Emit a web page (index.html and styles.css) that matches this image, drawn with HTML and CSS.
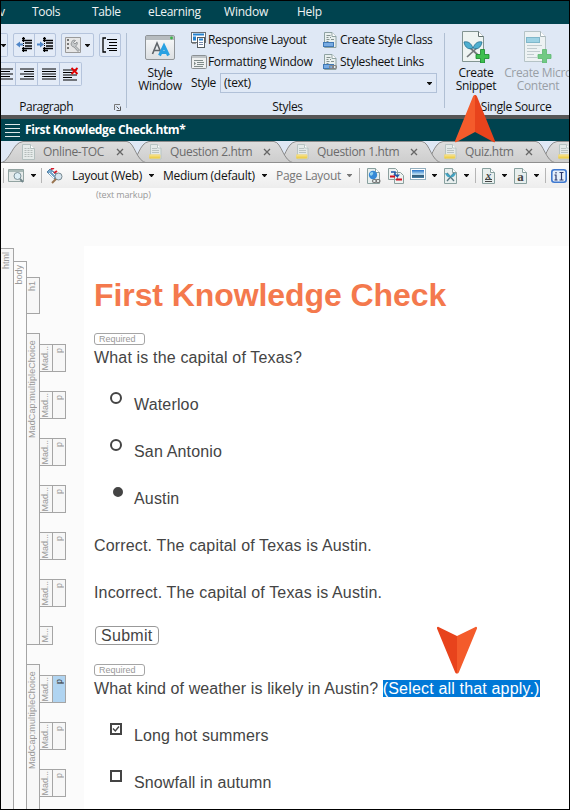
FILE: index.html
```html
<!DOCTYPE html>
<html lang="en">
<head>
<meta charset="utf-8">
<title>First Knowledge Check.htm</title>
<link rel="stylesheet" href="styles.css">
</head>
<body>
<svg class="defs" aria-hidden="true">
  <defs>
    <linearGradient id="gold" x1="0" y1="0" x2="0" y2="1"><stop offset="0" stop-color="#f7e59a"/><stop offset="1" stop-color="#ebc937"/></linearGradient>
    <linearGradient id="win" x1="0" y1="0" x2="0" y2="1"><stop offset="0" stop-color="#fafbfb"/><stop offset="1" stop-color="#dcdfe2"/></linearGradient>
    <linearGradient id="tabfill" x1="0" y1="0" x2="0" y2="1"><stop offset="0" stop-color="#dedede"/><stop offset="1" stop-color="#cdcdcd"/></linearGradient>
    <linearGradient id="sky" x1="0" y1="0" x2="0" y2="1"><stop offset="0" stop-color="#2373c8"/><stop offset=".55" stop-color="#c3e4f7"/><stop offset=".7" stop-color="#2c5471"/><stop offset="1" stop-color="#4986ac"/></linearGradient>
  </defs>
  <symbol id="caret" viewBox="0 0 5 3"><path d="M0 0h5v.6L2.9 3h-.8L0 .6z" fill="currentColor"/></symbol>
  <symbol id="close" viewBox="0 0 8 8"><path d="M1 1l6 6M7 1L1 7" stroke="#666" stroke-width="1.3"/></symbol>
  <symbol id="doc" viewBox="0 0 13 16"><path d="M.5.5h8l4 4v11H.5z" fill="#e6ebea" stroke="#b3bfbe"/><path d="M8.500.5v4h4" fill="#fff" stroke="#b3bfbe"/><path d="M2.500 4.500h5M2.500 6.500h8M2.500 8.500h8M2.500 10.500h8M2.500 12.500h8" stroke="#b5bcbb"/><path d="M5 3v11M8 5v9" stroke="#e6ebea"/></symbol>
  <symbol id="quiz" viewBox="0 0 13 16"><path d="M1.500.5h7l3.500 3.500v11H1.500z" fill="#e4e9e8" stroke="#b8c4c3"/><path d="M8.500.5v3.500H12" fill="#fff" stroke="#b8c4c3"/><path d="M3 4.500h5M3 6.500h7M3 8.500h7" stroke="#b9c2c1"/><rect x=".2" y="10.500" width="11" height="4" rx=".8" fill="url(#gold)" stroke="#e9d27a" stroke-width=".5"/></symbol>
  <symbol id="sheet" viewBox="0 0 14 16"><path d="M1.500.5h7.500l4 4v11H1.500z" fill="#e9f0ef" stroke="#8fa3a2"/><path d="M9 .5v4h4" fill="#fff" stroke="#8fa3a2"/><path d="M3.500 3.500h4M3.500 5.500h2M7 5.500h1M3.500 7.500h3M8 7.500h3M3.500 9.500h2" stroke="#83918f"/><rect x=".5" y="10.500" width="10" height="4" fill="#78ace3" stroke="#3f78b5"/></symbol>
  <symbol id="page" viewBox="0 0 13 16"><path d="M.5.5h8l4 4v11H.5z" fill="#e8efee" stroke="#88a09e"/><path d="M8.500.5v4h4" fill="#fff" stroke="#88a09e"/></symbol>
</svg>

<div class="window">
  <nav class="menu">
    <span class="m-cut">v</span><span class="m-tools">Tools</span><span class="m-table">Table</span><span class="m-elearn">eLearning</span><span class="m-window">Window</span><span>Help</span>
  </nav>

  <section class="ribbon">
    <div class="group paragraph">
      <div class="btn-row">
        <div class="btns"><span class="cell c-edge"><svg class="caret"><use href="#caret"/></svg></span></div>
        <div class="btns">
          <span class="cell c21"><svg width="17" height="16" viewBox="0 0 17 16"><path d="M6 1.500h3M6 3.500h10M9 6h7M9 9h7M6 11.500h10M6 13.500h5" stroke="#000" stroke-width="1.300"/><path d="M7.500 0v16" stroke="#000" stroke-dasharray="1 1"/><path d="M0 7.500l4-3v2h3v2H4v2z" fill="#4f86c8"/></svg></span>
          <span class="cell c21"><svg width="17" height="16" viewBox="0 0 17 16"><path d="M6 1.500h3M6 3.500h10M9 6h7M9 9h7M6 11.500h10M6 13.500h5" stroke="#000" stroke-width="1.300"/><path d="M7.500 0v16" stroke="#000" stroke-dasharray="1 1"/><path d="M7 7.500l-4-3v2H0v2h3v2z" fill="#4f86c8"/></svg></span>
        </div>
        <div class="btns">
          <span class="cell c33"><svg width="16" height="16" viewBox="0 0 16 16"><path d="M.5.5h15v15H.5z" fill="#e6e6e6" stroke="#9a9a9a"/><path d="M3 2v12" stroke="#777" stroke-width="2" stroke-dasharray="2 2"/><path d="M6.500 5.500a3 3 0 0 1 4-2L8.500 5.500 10 7l2-2a3 3 0 0 1-1.500 4L14.500 13 13 14.500 9 10a3 3 0 0 1-2.500-4.500z" fill="#c5c8ca" stroke="#85898c" stroke-width=".8"/></svg><svg class="caret"><use href="#caret"/></svg></span>
        </div>
        <div class="btns">
          <span class="cell c21"><svg width="16" height="16" viewBox="0 0 16 16"><path d="M4 1H1v14h3" fill="none" stroke="#000" stroke-width="1.300"/><path d="M5 2.500h10M7 5.500h8M7 8.500h8M5 11.500h10M7 13.500h8" stroke="#000" stroke-width="1.200"/></svg></span>
        </div>
      </div>
      <div class="btn-row second">
        <div class="btns">
          <span class="cell c-left"><svg width="12" height="12" viewBox="0 0 12 12"><path d="M0 1h12M0 3.500h9M0 6h12M0 8.500h9M0 11h12" stroke="#000" stroke-width="1.200"/></svg></span>
          <span class="cell c22"><svg width="14" height="12" viewBox="0 0 14 12"><path d="M0 1h14M4 3.500h10M0 6h14M4 8.500h10M0 11h14" stroke="#000" stroke-width="1.200"/></svg></span>
          <span class="cell c22"><svg width="14" height="12" viewBox="0 0 14 12"><path d="M0 1h14M0 3.500h14M0 6h14M0 8.500h14M0 11h14" stroke="#000" stroke-width="1.200"/></svg></span>
          <span class="cell c22"><svg width="16" height="14" viewBox="0 0 16 14"><path d="M0 3h14M0 5.500h9M0 8h14M0 10.500h9M0 13h14" stroke="#000" stroke-width="1.200"/><path d="M8.500 1l6 6M14.500 1l-6 6" stroke="#e00000" stroke-width="1.800"/></svg></span>
        </div>
      </div>
      <div class="caption cap-para"><span>Paragraph</span><svg width="7" height="7" viewBox="0 0 7 7"><path d="M.5 6V.5H6" fill="none" stroke="#777"/><path d="M2.500 2.500L5 5M6.500 2.500v4h-4" fill="none" stroke="#555"/></svg></div>
    </div>

    <div class="group styles">
      <div class="style-body">
        <div class="big">
          <svg width="30" height="25" viewBox="0 0 30 25"><rect x=".5" y=".5" width="29" height="24" rx="1.500" fill="url(#win)" stroke="#909599"/><path d="M1 1h28v4H1z" fill="#b7bcbf"/><circle cx="26.500" cy="3" r="1.400" fill="#3ab54a"/><path d="M7.500 19L12 8l4.500 11M9 15.500h6" fill="none" stroke="#5e6469" stroke-width="1.600"/><path d="M14.500 20.500L19 11l4.500 9.500M16 17.500h6" fill="none" stroke="#28a1e2" stroke-width="3"/></svg>
          <span>Style<br>Window</span>
        </div>
        <div class="links">
          <div class="link-row">
            <span class="link l-a"><svg width="16" height="16" viewBox="0 0 16 16"><rect x=".5" y=".5" width="14" height="10" fill="#fff" stroke="#696f75"/><path d="M2 2.500h11" stroke="#2481ce" stroke-width="2"/><path d="M2 4.500h3v4H2z" fill="#2481ce"/><rect x="6.500" y="5.500" width="7" height="10" fill="#fff" stroke="#555b60"/><path d="M8 7.500h4" stroke="#2481ce" stroke-width="2"/><path d="M8 10.500h4M8 12.500h4" stroke="#78a"/><path d="M1 11.500h4" stroke="#999"/></svg>Responsive Layout</span>
            <span class="link"><svg class="sheet-icon"><use href="#sheet"/></svg>Create Style Class</span>
          </div>
          <div class="link-row row-b">
            <span class="link l-a"><svg width="16" height="15" viewBox="0 0 16 15"><rect x=".5" y=".5" width="15" height="13" rx="1" fill="#eef0f0" stroke="#8b9094"/><path d="M1 2h14" stroke="#bfc4c7" stroke-width="2"/><path d="M3 5.500h9M6 7.500h7M6 9.500h7M3 11.500h9" stroke="#7f8b89"/><path d="M3 6.500l2 2-2 2z" fill="#7f8b89"/></svg>Formatting Window</span>
            <span class="link"><svg class="sheet-icon"><use href="#sheet"/><g fill="none" stroke="#858585" stroke-width="1.200"><rect x="6.500" y="11.500" width="4" height="3" rx="1.500"/><rect x="9.500" y="11.500" width="4" height="3" rx="1.500"/></g></svg>Stylesheet Links</span>
          </div>
          <div class="select-row"><label>Style</label><div class="select"><span>(text)</span><svg class="caret"><use href="#caret"/></svg></div></div>
        </div>
      </div>
      <div class="caption cap-styles">Styles</div>
    </div>

    <div class="group source">
      <div class="source-body">
        <div class="big">
          <svg width="28" height="32" viewBox="0 0 28 32"><path d="M.5.500h16l5 5v25H.5z" fill="#eef4f2" stroke="#829492"/><path d="M16.500.5v5h5" fill="#fff" stroke="#61716f"/><path d="M5 26L18 14M17 25L5 14" stroke="#73797b" stroke-width="1.700"/><path d="M2 11c4-1 7 1 9 6-4 2-8 0-9-6zM20 11c-4-1-7 1-9 6 4 2 8 0 9-6z" fill="#4eafd0" stroke="#246e8e" stroke-width=".8"/><path d="M18.500 18.500h4v5h4.500v4h-4.500v4.500h-4v-4.500H14v-4h4.500z" fill="#3dbf4e" stroke="#16852a" stroke-width=".8"/></svg>
          <span>Create<br>Snippet</span>
        </div>
        <div class="big disabled">
          <svg width="28" height="32" viewBox="0 0 28 32"><path d="M.5.500h16l5 5v25H.5z" fill="#edf2f3" stroke="#b5c3c6"/><path d="M16.500.5v5h5" fill="#fff" stroke="#a7b5b8"/><rect x="2.500" y="6.500" width="13" height="5" fill="#9dd2e4" stroke="#80b7ca"/><path d="M3 14.500h15M3 17.500h10M3 20.500h13M3 23.500h7M3 26.500h10" stroke="#c0cbce"/><path d="M18.500 18.500h4v5h4.500v4h-4.500v4.500h-4v-4.500H14v-4h4.500z" fill="#72ca84" stroke="#5cb870" stroke-width=".8"/></svg>
          <span>Create Micro<br>Content</span>
        </div>
      </div>
      <div class="caption">Single Source</div>
    </div>
  </section>

  <div class="divider"></div>

  <header class="title">
    <svg width="15" height="14" viewBox="0 0 15 14"><path d="M0 1.500h15M0 5.500h15M0 9.500h15M0 13.500h15" stroke="#dfe9ea"/></svg>
    <span>First Knowledge Check.htm*</span>
  </header>

  <div class="tabs">
    <svg class="tab-shapes" width="568" height="22" viewBox="1 141 568 22">
      <g fill="url(#tabfill)" stroke="#8b8b8b">
        <path d="M539 163c7-3 8-20 18-21.500h16V163z"/>
        <path d="M425 163c7-3 8-20 18-21.500h93c8 1 9 20 20 21.500z"/>
        <path d="M278 163c7-3 8-20 18-21.500h126c8 1 9 20 20 21.500z"/>
        <path d="M131 163c7-3 8-20 18-21.500h125c8 1 9 20 20 21.500z"/>
        <path d="M1 163C11 160 12 143 23 141.500h104c8 1 9 20 20 21.500z"/>
      </g>
      <path d="M1 162.500h568" stroke="#8f8f8f"/>
    </svg>
    <div class="tab t1"><svg class="file"><use href="#doc"/></svg><span>Online-TOC</span><svg class="x"><use href="#close"/></svg></div>
    <div class="tab t2"><svg class="file"><use href="#quiz"/></svg><span>Question 2.htm</span><svg class="x"><use href="#close"/></svg></div>
    <div class="tab t3"><svg class="file"><use href="#quiz"/></svg><span>Question 1.htm</span><svg class="x"><use href="#close"/></svg></div>
    <div class="tab t4"><svg class="file"><use href="#quiz"/></svg><span>Quiz.htm</span><svg class="x"><use href="#close"/></svg></div>
    <div class="tab t5"><svg class="file"><use href="#quiz"/></svg></div>
  </div>

  <div class="toolbar">
    <i class="sep"></i>
    <span class="tool w38"><svg width="17" height="16" viewBox="0 0 17 16"><path d="M.5 1.500h15v12H.5z" fill="#e5eae9" stroke="#92a3a1"/><path d="M1 3h14" stroke="#a8b9b7" stroke-width="2"/><circle cx="9.500" cy="8" r="3.500" fill="#dceef5" stroke="#7c9299"/><path d="M12 11l3 3" stroke="#71858b" stroke-width="1.800"/></svg><svg class="caret"><use href="#caret"/></svg></span>
    <i class="sep"></i>
    <span class="tool w31"><svg width="17" height="16" viewBox="0 0 17 16"><path d="M0 4l3-3 9 7-3 4z" fill="#76a7cc" stroke="#376b93" stroke-width=".8"/><path d="M4 1l3-1M7 5l3-2" stroke="#d41d2c" stroke-width="2"/><path d="M2 5l5 5M5 4l4 4" stroke="#fff"/><circle cx="11.500" cy="8.500" r="3.500" fill="#d6e5ef" stroke="#788991"/><path d="M9 11l-4 4" stroke="#98734f" stroke-width="2"/></svg></span>
    <span class="tool text w91"><b>Layout (Web)</b><svg class="caret"><use href="#caret"/></svg></span>
    <span class="tool text w113"><b>Medium (default)</b><svg class="caret"><use href="#caret"/></svg></span>
    <span class="tool text w83 off"><b>Page Layout</b><svg class="caret"><use href="#caret"/></svg></span>
    <i class="sep"></i>
    <span class="tool w21"><svg width="14" height="16" viewBox="0 0 14 16"><use href="#page" width="13" height="16"/><circle cx="6" cy="7" r="4.200" fill="#3689d6"/><path d="M3 5c2-2 4-1 3 1S4 8 3 7z" fill="#8fd0ed"/><g fill="none" stroke="#777" stroke-width="1.200"><rect x="5.500" y="11.500" width="4" height="3" rx="1.500"/><rect x="9" y="11.500" width="4" height="3" rx="1.500"/></g></svg></span>
    <span class="tool w22"><svg width="16" height="16" viewBox="0 0 16 16"><path d="M.5.5h7l2 2v9h-9zM6.500 4.500h6l3 3v8h-9z" fill="#edf2f1" stroke="#8ca09e"/><path d="M3 4h4v3" fill="none" stroke="#1e55a8" stroke-width="1.500"/><path d="M5 6.500h7l-2.500 3z" fill="#1e55a8"/><path d="M2 8.500h5M8 11.500h6" stroke="#cf1020" stroke-width="2"/></svg></span>
    <span class="tool w34 pic"><svg width="16" height="12" viewBox="0 0 16 12"><rect x=".5" y=".5" width="15" height="11" fill="#fff" stroke="#93aebd"/><path d="M2 2h12v8H2z" fill="url(#sky)"/></svg><svg class="caret"><use href="#caret"/></svg></span>
    <span class="tool w31b"><svg width="13" height="16" viewBox="0 0 13 16"><use href="#page"/><path d="M3 13l7-8M10 13L3 5" stroke="#58757f" stroke-width="1.300"/><path d="M1 5c3 0 5 2 5.500 4C4 10 2 8 1 5zM12 5C9 5 7 7 6.500 9 9 10 11 8 12 5z" fill="#42a3c2"/></svg><svg class="caret"><use href="#caret"/></svg></span>
    <i class="sep"></i>
    <span class="tool w32"><span class="glyph"><svg width="13" height="16" viewBox="0 0 13 16"><use href="#page"/><path d="M3 11.500h7M3 13.500h7" stroke="#444"/></svg><em class="gx">x</em></span><svg class="caret"><use href="#caret"/></svg></span>
    <span class="tool w31c"><span class="glyph"><svg width="13" height="16" viewBox="0 0 13 16"><use href="#page"/></svg><em class="ga">a</em></span><svg class="caret"><use href="#caret"/></svg></span>
    <i class="sep"></i>
    <span class="tool"><svg width="16" height="14" viewBox="0 0 16 14"><rect x=".8" y=".8" width="14.400" height="12.400" rx="2.500" fill="#e5effb" stroke="#3e78cf" stroke-width="1.600"/><path d="M5 3v1.500M3.500 6H5v5M3.500 11h3M8.500 3.500h4M10.500 3.500v7.500M8.500 11h4" fill="none" stroke="#2c3a6e" stroke-width="1.200"/></svg></span>
  </div>

  <main class="editor">
    <div class="markup">(text markup)</div>
    <div class="canvas">
      <aside class="structure">
        <div class="bar html"><span>html</span></div>
        <div class="bar body"><span>body</span></div>
        <div class="blocks">
          <div class="block h1-block"><div class="bar"><span>h1</span></div></div>
          <div class="block mc">
            <div class="bar"><span>MadCap:multipleChoice</span></div>
            <div class="cells">
              <div class="pair"><div class="bar"><span>Mad...</span></div><div class="bar p"><span>p</span></div></div>
              <div class="pair"><div class="bar"><span>Mad...</span></div><div class="bar p"><span>p</span></div></div>
              <div class="pair"><div class="bar"><span>Mad...</span></div><div class="bar p"><span>p</span></div></div>
              <div class="pair"><div class="bar"><span>Mad...</span></div><div class="bar p"><span>p</span></div></div>
              <div class="pair"><div class="bar"><span>Mad...</span></div><div class="bar p"><span>p</span></div></div>
              <div class="pair"><div class="bar"><span>Mad...</span></div><div class="bar p"><span>p</span></div></div>
              <div class="pair short"><div class="bar"><span>M...</span></div></div>
            </div>
          </div>
          <div class="block mc last">
            <div class="bar"><span>MadCap:multipleChoice</span></div>
            <div class="cells">
              <div class="pair"><div class="bar"><span>Mad...</span></div><div class="bar p active"><span>p</span></div></div>
              <div class="pair"><div class="bar"><span>Mad...</span></div><div class="bar p"><span>p</span></div></div>
              <div class="pair"><div class="bar"><span>Mad...</span></div><div class="bar p"><span>p</span></div></div>
            </div>
          </div>
        </div>
      </aside>
      <article class="page">
        <h1>First Knowledge Check</h1>
        <div class="required">Required</div>
        <p class="question">What is the capital of Texas?</p>
        <div class="option"><i class="radio"></i><p>Waterloo</p></div>
        <div class="option"><i class="radio"></i><p>San Antonio</p></div>
        <div class="option"><i class="radio on"></i><p>Austin</p></div>
        <p class="feedback">Correct. The capital of Texas is Austin.</p>
        <p class="feedback">Incorrect. The capital of Texas is Austin.</p>
        <div class="submit">Submit</div>
        <div class="required">Required</div>
        <p class="question tight">What kind of weather is likely in Austin? <mark>(Select all that apply.)</mark></p>
        <div class="option check"><svg width="12" height="12" viewBox="0 0 12 12"><path d="M1 1h10v10H1z" fill="#fff" stroke="#444" stroke-width="2"/><path d="M3 5.500l2.300 2.500L9 3.500" fill="none" stroke="#444" stroke-width="1.400"/></svg><p>Long hot summers</p></div>
        <div class="option check"><svg width="12" height="12" viewBox="0 0 12 12"><path d="M1 1h10v10H1z" fill="#fff" stroke="#444" stroke-width="2"/></svg><p>Snowfall in autumn</p></div>
      </article>
    </div>
  </main>

  <svg class="pointer up" width="42" height="49" viewBox="0 0 42 49"><path d="M21 1c-1 0-1.500.5-2 1.500L1 47c-.3 1 .5 1.700 1.500 1L21 38z" fill="#f45b2b"/><path d="M21 1c1 0 1.500.5 2 1.500L41 47c.3 1-.5 1.700-1.500 1L21 38z" fill="#e8431c"/></svg>
  <svg class="pointer down" width="42" height="48" viewBox="0 0 42 48"><path d="M21 47.500c-1 0-1.500-.5-2-1.500L1 2.500c-.3-1 .5-2 1.500-1.500L21 10z" fill="#e8431c"/><path d="M21 47.500c1 0 1.500-.5 2-1.500L41 2.500c.3-1-.5-2-1.500-1.500L21 10z" fill="#f45b2b"/></svg>
</div>
</body>
</html>
```
FILE: styles.css
```css
* { box-sizing: border-box; }
body { margin: 0; font: 12px/16px "Open Sans", "Noto Sans", sans-serif; letter-spacing: -.33px; color: #111; }
svg { display: block; flex: none; }
p, h1 { margin: 0; }
.defs { position: absolute; width: 0; height: 0; }
.window { position: relative; width: 570px; height: 810px; border: 1px solid #000; overflow: hidden; display: flex; flex-direction: column; background: #fbfbfb; white-space: nowrap; }
.window > * { flex: none; }
.caret { width: 5px; height: 3px; }

/* menu */
.menu { height: 23px; background: #00434f; color: #eef3f4; display: flex; line-height: 22px; }
.menu span { flex: none; }
.m-cut { width: 31px; margin-left: -2px; }
.m-cut + .m-tools { margin-left: 2px; }
.m-tools { width: 60px; }
.m-table { width: 56px; }
.m-elearn { width: 76px; }
.m-window { width: 73px; letter-spacing: -.2px; }

/* ribbon */
.ribbon { height: 91px; background: #dfe8f5; display: flex; padding-top: 9px; }
.group { flex: none; height: 75px; border-right: 1px solid #b0bfd3; display: flex; flex-direction: column; }
.paragraph { width: 126px; }
.btn-row { display: flex; gap: 5px; height: 24px; }
.btn-row.second { margin-top: 5px; }
.btns { display: flex; border: 1px solid #b5c4dc; border-radius: 2px; background: #e3ebf7; }
.btns:first-child { border-left: 0; border-radius: 0 2px 2px 0; }
.cell { display: flex; align-items: center; justify-content: center; gap: 4px; }
.cell + .cell { border-left: 1px solid #b5c4dc; }
.c-edge { width: 6px; justify-content: flex-start; overflow: hidden; }
.c-left { width: 14px; justify-content: flex-start; }
.c21 { width: 20px; }
.c21 + .c21 { width: 21px; }
.c33 { width: 31px; }
.c22 { width: 22px; }
.caption { margin-top: auto; height: 16px; line-height: 16px; text-align: center; position: relative; top: 7px; }
.cap-para { display: flex; justify-content: flex-end; align-items: center; gap: 41px; padding-right: 5px; letter-spacing: -.5px; }
.cap-styles { top: 6px; padding-left: 4px; }

.styles { width: 318px; }
.style-body { display: flex; }
.big { display: flex; flex-direction: column; align-items: center; text-align: center; line-height: 13px; }
.styles .big { width: 66px; margin-right: -2px; padding-top: 2px; gap: 6px; }
.links { display: flex; flex-direction: column; }
.link-row { display: flex; height: 22px; margin-top: -3px; }
.row-b { margin-top: 0; }
.link { display: flex; align-items: center; gap: 3px; letter-spacing: -.33px; position: relative; top: -1px; }
.l-a { width: 132px; gap: 1px; margin-left: 0; }
.sheet-icon { width: 14px; height: 16px; }
.select-row { display: flex; align-items: center; margin-top: -1px; }
.select-row label { width: 29px; }
.select { width: 217px; height: 20px; border: 1px solid #b1c1d8; background: #e0e9f6; display: flex; align-items: center; justify-content: space-between; padding: 0 4px 0 3px; }

.source { border: 0; width: 124px; }
.source-body { display: flex; padding-left: 1px; }
.source .big { width: 60px; flex: none; gap: 3px; padding-top: 0; margin-top: -2px; }
.source .big.disabled { width: 70px; margin-left: -3px; color: #999fa6; }
.source .caption { padding-left: 18px; }

.divider { height: 4px; background: #565656; }
.title { height: 22px; background: #00434f; color: #fff; display: flex; align-items: center; gap: 5px; padding-left: 4px; font-weight: 700; letter-spacing: -.37px; }

/* tabs */
.tabs { position: relative; height: 22px; background: #dfe8f5; display: flex; color: #6b6b6b; }
.tab-shapes { position: absolute; left: 0; top: 0; }
.tab { position: relative; flex: none; display: flex; align-items: center; }
.tab .file { width: 13px; height: 16px; margin-right: 8px; }
.tab .x { width: 8px; height: 8px; margin-left: auto; }
.t1 { margin-left: 21px; width: 102px; }
.t2 { margin-left: 25px; width: 122px; }
.t3 { margin-left: 25px; width: 122px; }
.t4 { margin-left: 26px; width: 89px; }
.t5 { margin-left: 25px; }

/* toolbar */
.toolbar { height: 25px; background: linear-gradient(#fdfdfd, #ededed); display: flex; align-items: center; padding-left: 2px; }
.toolbar > * { flex: none; }
.sep { width: 1px; height: 15px; background: #b5b5b5; }
.tool { display: flex; align-items: center; gap: 6px; }
.tool b { font-weight: 400; letter-spacing: -.27px; }
.off { color: #777; }
.w38 { width: 37px; padding-left: 4px; }
.w31 { width: 30px; padding-left: 5px; }
.w91 { width: 91px; gap: 7px; }
.w113 { width: 113px; gap: 7px; }
.w83 { width: 83px; }
.w21 { width: 28px; padding-left: 7px; }
.w22 { width: 22px; }
.w34 { width: 34px; }
.w31b { width: 31px; gap: 7px; }
.w32 { width: 38px; padding-left: 6px; gap: 7px; }
.w31c { width: 31px; gap: 7px; }
.toolbar .tool:last-child { padding-left: 5px; }
.pic svg:first-child { margin-top: -4px; }
.glyph { display: grid; place-items: center; }
.glyph > * { grid-area: 1 / 1; }
.glyph em { font: bold 12px/12px "Liberation Serif", serif; color: #444; letter-spacing: 0; }
.glyph .gx { font-size: 11px; font-style: italic; margin-top: -2px; }
.glyph .ga { margin-top: 2px; font-size: 13px; }

/* editor */
.editor { flex: 1; display: flex; flex-direction: column; }
.markup { height: 58px; padding-left: 95px; font-size: 9px; line-height: 14px; color: #999; letter-spacing: -.15px; }
.canvas { flex: 1; display: flex; min-height: 0; }
.structure { width: 83px; flex: none; display: flex; font: 9px/12px "Liberation Sans", sans-serif; letter-spacing: 0; color: #999; }
.bar { width: 13px; flex: none; border: 1px solid #a5a5a5; border-left: 0; background: #f7f7f7; }
.bar span { display: block; width: 10px; writing-mode: vertical-rl; transform: rotate(180deg); line-height: 10px; margin-top: 3px; }
.html { margin-top: 2px; border-bottom: 0; }
.body { margin-top: 15px; border-bottom: 0; background: #fcfcfc; }
.blocks { margin-top: 31px; }
.block { display: flex; }
.h1-block { height: 37px; margin-bottom: 19px; }
.mc { height: 312px; margin-bottom: 19px; }
.mc > .bar span { margin-top: 6px; letter-spacing: .12px; }
.last { height: 146px; margin-bottom: 0; }
.last > .bar { border-bottom: 0; }
.cells { padding-top: 11px; }
.pair { display: flex; height: 28px; margin-bottom: 19px; }
.cells .bar span { margin-top: 1px; letter-spacing: -.1px; }
.cells .p span { width: 12px; line-height: 12px; margin-top: 3px; }
.cells .active { background: #b0d4f1; color: #333; }
.short { height: 19px; margin: 0; }

.page { flex: 1; background: #fff; padding-left: 10px; font: 16px/24px "Liberation Sans", Arial, sans-serif; letter-spacing: .16px; color: #444; }
.page h1 { padding-top: 29px; font-size: 32px; line-height: 40px; letter-spacing: -.08px; color: #f4794d; }
.required { width: 51px; height: 12px; border: 1px solid #a5a5a5; border-radius: 3px; font-size: 9px; line-height: 10px; letter-spacing: 0; color: #999; padding-left: 4px; margin-top: 18px; }
.question { margin: 1px 0 23px; }
.tight { letter-spacing: .1px; }
.option { display: flex; height: 24px; margin-bottom: 23px; padding-left: 16px; gap: 12px; }
.radio { width: 12px; height: 12px; border: 2px solid #444; border-radius: 50%; margin-top: -1px; }
.radio.on { width: 10px; height: 10px; background: #444; margin: 0 -1px 0 3px; }
.check { letter-spacing: .13px; }
.check svg { margin-top: -1px; }
.feedback { margin-bottom: 23px; }
.submit { width: 64px; height: 19px; border: 1px solid #999; border-radius: 4px; line-height: 17px; padding-left: 5px; letter-spacing: .3px; margin: -2px 0 0 1px; }
.submit + .required { margin-top: 19px; }
mark { background: #0078d7; color: #fff; letter-spacing: .17px; }

/* callout arrows over the window */
.pointer { position: absolute; }
.up { left: 453px; top: 93px; }
.down { left: 435px; top: 625px; }
```
